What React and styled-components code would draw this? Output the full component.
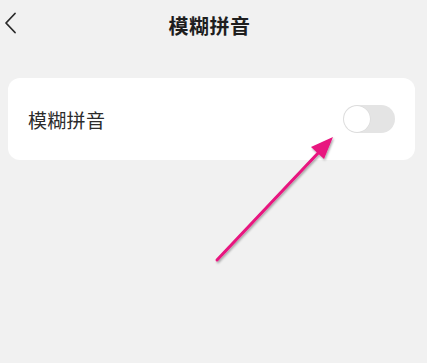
import React, { useState } from "react";
import styled, { createGlobalStyle } from "styled-components";

const GlobalStyle = createGlobalStyle`
  html, body {
    margin: 0;
    padding: 0;
    background: #f1f1f1;
  }
  body {
    font-family: "Noto Sans CJK SC", "Noto Sans", sans-serif;
  }
`;

function App() {
  const [on, setOn] = useState(false);

  return (
    <Page>
      <GlobalStyle />
      <Header>
        <BackButton aria-label="back">
          <svg width="14" height="22" viewBox="0 0 14 22">
            <path
              d="M11 1.5 L2 11 L11 20.5"
              fill="none"
              stroke="#2a2a2a"
              strokeWidth="1.8"
              strokeLinecap="round"
              strokeLinejoin="round"
            />
          </svg>
        </BackButton>
        <Title>模糊拼音</Title>
      </Header>

      <Card>
        <Label>模糊拼音</Label>
        <Switch $on={on} onClick={() => setOn(!on)}>
          <Knob $on={on} />
        </Switch>
      </Card>

      <Annotation width="427" height="363" viewBox="0 0 427 363">
        <defs>
          <filter id="shadow" x="-20%" y="-20%" width="140%" height="140%">
            <feDropShadow dx="1" dy="1.5" stdDeviation="1.2" floodColor="#000" floodOpacity="0.35" />
          </filter>
        </defs>
        <g filter="url(#shadow)">
          <line
            x1="217"
            y1="260"
            x2="320"
            y2="151"
            stroke="#e8137f"
            strokeWidth="3"
            strokeLinecap="round"
          />
          <polygon points="333,137 324,159 311,147" fill="#e8137f" />
        </g>
      </Annotation>
    </Page>
  );
}

export default App;

const Page = styled.div`
  position: relative;
  width: 427px;
  height: 363px;
  background: #f1f1f1;
  overflow: hidden;
`;

const Header = styled.div`
  position: relative;
  height: 50px;
  display: flex;
  align-items: center;
  justify-content: center;
`;

const BackButton = styled.button`
  position: absolute;
  left: 4px;
  top: 12px;
  border: none;
  background: none;
  padding: 0;
  cursor: pointer;
  display: flex;
`;

const Title = styled.div`
  font-size: 20px;
  font-weight: 700;
  color: #1e1e1e;
  letter-spacing: 0.5px;
  margin-left: -8px;
`;

const Card = styled.div`
  margin: 28px 12px 0 8px;
  height: 82px;
  background: #ffffff;
  border-radius: 12px;
  display: flex;
  align-items: center;
  justify-content: space-between;
  padding: 0 20px 0 20px;
`;

const Label = styled.div`
  font-size: 19px;
  color: #2b2b2b;
  letter-spacing: 0.3px;
`;

const Switch = styled.div`
  width: 52px;
  height: 28px;
  border-radius: 14px;
  background: ${(p) => (p.$on ? "#2f7cf6" : "#e4e4e4")};
  position: relative;
  cursor: pointer;
  margin-top: -1px;
`;

const Knob = styled.div`
  position: absolute;
  top: 1px;
  left: ${(p) => (p.$on ? "25px" : "1px")};
  width: 26px;
  height: 26px;
  border-radius: 50%;
  background: #ffffff;
  box-shadow: 0 0 0 0.5px #d6d6d6;
`;

const Annotation = styled.svg`
  position: absolute;
  left: 0;
  top: 0;
  pointer-events: none;
`;
